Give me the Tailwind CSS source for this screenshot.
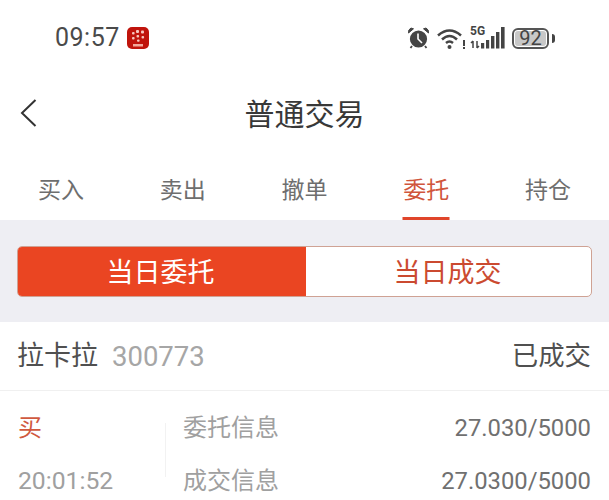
<!DOCTYPE html>
<html lang="zh">
<head>
  <meta charset="UTF-8">
  <meta name="viewport" content="width=device-width, initial-scale=1.0">
  <title>普通交易</title>
  <script src="https://cdn.jsdelivr.net/npm/@tailwindcss/browser@4"></script>
</head>
<body class="bg-white font-['Roboto','Noto_Sans_CJK_SC',sans-serif] overflow-hidden">
  <div class="w-[609px] h-[500px] overflow-hidden flex flex-col">
    <!-- Status bar -->
    <div class="h-[76px] shrink-0 flex items-start justify-between pt-[23px] pl-[55px] pr-[54px]">
      <div class="flex items-center gap-[7px] h-[30px]">
        <span class="text-[25px] leading-[30px] tracking-[0.5px] text-[#4a4a4a] font-['Roboto']">09:57</span>
        <svg width="22" height="22" viewBox="0 0 22 22">
          <rect width="22" height="22" rx="5" fill="#c0140c"/>
          <g fill="#f7c9c0">
            <rect x="9" y="3" width="3" height="3" rx="1"/><rect x="14" y="3.5" width="3" height="3" rx="1"/>
            <rect x="5" y="5" width="2.6" height="2.6" rx="1"/><rect x="9.5" y="8" width="2.6" height="2.6" rx="1"/>
            <rect x="14.5" y="9" width="2.6" height="2.6" rx="1"/><rect x="5" y="10" width="2.6" height="2.6" rx="1"/>
            <rect x="10" y="12.5" width="2.6" height="2.2" rx="1"/>
          </g>
          <rect x="6" y="17" width="10" height="2.5" fill="#f2a99c"/>
        </svg>
      </div>
      <div class="flex items-center h-[30px] text-[#444]">
        <!-- alarm -->
        <svg width="23" height="22" viewBox="0 0 23 22" class="mr-[7px]">
          <circle cx="11.5" cy="12" r="8.6" fill="#444"/>
          <path d="M1.5 6 L6.5 1.8 L4 1 Q1 2.5 1.5 6Z M21.5 6 L16.5 1.8 L19 1 Q22 2.5 21.5 6Z" fill="#444" stroke="#444"/>
          <path d="M11 6.5 V12 L15 16" fill="none" stroke="#fff" stroke-width="1.6"/>
          <path d="M5 19 L3.5 21 M18 19 L19.5 21" stroke="#444" stroke-width="1.8"/>
        </svg>
        <!-- wifi -->
        <svg width="29" height="23" viewBox="0 0 29 23" class="mr-[4px]">
          <path d="M1 8.5 Q12.5 -1.5 24 8.5" fill="none" stroke="#444" stroke-width="2.5"/>
          <path d="M5 12.5 Q12.5 5.5 20 12.5" fill="none" stroke="#444" stroke-width="2.5"/>
          <path d="M9 16 Q12.5 13 16 16" fill="none" stroke="#444" stroke-width="2.5"/>
          <circle cx="12.5" cy="20" r="2" fill="#444"/>
          <rect x="26" y="13" width="2" height="6" fill="#444"/><rect x="26" y="20" width="2" height="2" fill="#444"/>
        </svg>
        <!-- 5G and signal -->
        <div class="relative w-[36px] h-[24px] mr-[6px]">
          <span class="absolute left-0 top-[-1px] text-[12px] leading-[13px] font-bold font-['Roboto'] text-[#444]">5G</span>
          <svg width="36" height="24" viewBox="0 0 36 24" class="absolute inset-0">
            <path d="M3 15 V22 M1 17 L3 15 M7 15 V22 M7 22 L9 20" stroke="#444" stroke-width="1.5" fill="none"/>
            <rect x="11" y="17" width="3.2" height="5.5" fill="#444"/>
            <rect x="16" y="14" width="3.2" height="8.5" fill="#444"/>
            <rect x="21" y="10" width="3.4" height="12.5" fill="#444"/>
            <rect x="26" y="6" width="3.4" height="16.5" fill="#444"/>
            <rect x="31" y="1" width="3.6" height="21.5" fill="#444"/>
          </svg>
        </div>
        <!-- battery -->
        <div class="w-[37px] h-[21px] rounded-[6px] border-2 border-[#555] p-px">
          <div class="w-full h-full rounded-[3px] bg-[#c8c8c8] flex items-center justify-center text-[20px] leading-none font-['Roboto'] text-[#444]">92</div>
        </div>
        <div class="w-[3px] h-[9px] ml-[3px] rounded-r-sm bg-[#444]"></div>
      </div>
    </div>

    <!-- Nav bar -->
    <div class="h-[76px] shrink-0 relative flex items-center justify-center">
      <svg width="18" height="30" viewBox="0 0 18 30" class="absolute left-[19px] top-[22px]">
        <path d="M16.5 2 L3 15 L16.5 28" fill="none" stroke="#333" stroke-width="2"/>
      </svg>
      <h1 class="text-[30px] leading-[36px] font-normal text-[#383838] mt-[1px]">普通交易</h1>
    </div>

    <!-- Tabs -->
    <div class="h-[68px] shrink-0 grid grid-cols-5 text-[23px] text-[#6e6e6e]">
      <div class="flex justify-center pt-[24px] leading-[30px]">买入</div>
      <div class="flex justify-center pt-[24px] leading-[30px]">卖出</div>
      <div class="flex justify-center pt-[24px] leading-[30px]">撤单</div>
      <div class="relative flex justify-center pt-[24px] leading-[30px] text-[#d0553c]">
        委托
        <span class="absolute bottom-0 left-1/2 -translate-x-1/2 w-[47px] h-[3px] bg-[#e0452a]"></span>
      </div>
      <div class="flex justify-center pt-[24px] leading-[30px]">持仓</div>
    </div>

    <!-- Segment -->
    <div class="h-[102px] shrink-0 bg-[#eeeef3] px-[17px] pt-[26px]">
      <div class="h-[51px] flex rounded-[5px] overflow-hidden border border-[#cfa294] bg-white text-[27px]">
        <div class="w-[288px] bg-[#ea4522] text-[#fff] flex items-center justify-center pt-[3px] pr-[3px]">当日委托</div>
        <div class="flex-1 text-[#cb4a30] flex items-center justify-center pt-[3px] pr-[2px]">当日成交</div>
      </div>
    </div>

    <!-- Order row -->
    <div class="h-[69px] shrink-0 flex items-center justify-between pl-[17px] pr-[18px] pt-[1px] border-b border-[#f0f0f0]">
      <div class="flex items-center gap-[14px]">
        <span class="text-[27px] text-[#505050]">拉卡拉</span>
        <span class="text-[27.5px] text-[#a6a6a6] font-['Roboto']">300773</span>
      </div>
      <span class="text-[26.4px] text-[#505050]">已成交</span>
    </div>

    <div class="flex-1 flex pl-[18px] pr-[18px]">
      <div class="w-[147px] shrink-0 pt-[21px] flex flex-col gap-[21px]">
        <span class="text-[24px] leading-[32px] text-[#d0593f]">买</span>
        <span class="text-[24.7px] leading-[32px] text-[#a0a0a0] font-['Roboto']">20:01:52</span>
      </div>
      <div class="w-px h-[54px] mt-[32px] bg-[#f2f2f2]"></div>
      <div class="flex-1 pl-[17px] pt-[21px] flex flex-col gap-[21px] text-[24px] leading-[32px] text-[#a0a0a0]">
        <div class="flex justify-between"><span>委托信息</span><span class="text-[#707070] font-['Roboto'] text-[23.8px]">27.030/5000</span></div>
        <div class="flex justify-between"><span>成交信息</span><span class="text-[#707070] font-['Roboto'] text-[23.8px]">27.0300/5000</span></div>
      </div>
    </div>
  </div>
</body>
</html>
